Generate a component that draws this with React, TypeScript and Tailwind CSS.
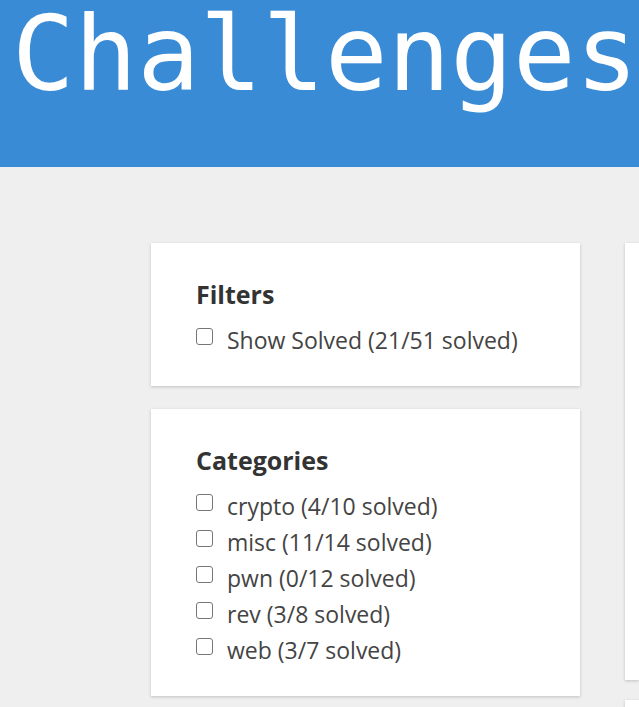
const categories = [
  { name: "crypto", solved: 4, total: 10 },
  { name: "misc", solved: 11, total: 14 },
  { name: "pwn", solved: 0, total: 12 },
  { name: "rev", solved: 3, total: 8 },
  { name: "web", solved: 3, total: 7 },
];

function Check({ label }: { label: string }) {
  return (
    <label className="flex items-start h-[36px]">
      <span className="mt-[4px] w-[17px] h-[17px] shrink-0 rounded-[3px] border border-[#767676] bg-white" />
      <span className="ml-[14px] text-[23px] leading-[32px] text-[#444] whitespace-nowrap">{label}</span>
    </label>
  );
}

function Card({ title, children }: { title: string; children: React.ReactNode }) {
  return (
    <div className="bg-white shadow-[0_1px_3px_rgba(0,0,0,0.2)] px-[45px] pt-[35px] pb-[26px]">
      <h3 className="text-[25px] leading-[32px] font-bold text-[#333] mb-[14px]">{title}</h3>
      {children}
    </div>
  );
}

export default function App() {
  return (
    <div className="h-[707px] bg-[#efefef] overflow-hidden" style={{ fontFamily: '"Open Sans", sans-serif' }}>
      <header className="h-[167px] bg-[#3a8bd6] overflow-hidden">
        <h1
          className="pl-[12px] pt-[2px] text-white text-[104px] leading-[104px] whitespace-nowrap"
          style={{ fontFamily: '"DejaVu Sans Mono", monospace' }}
        >
          Challenges
        </h1>
      </header>
      <main className="flex gap-[45px] pl-[151px] pt-[76px]">
        <div className="w-[429px] shrink-0 flex flex-col gap-[23px]">
          <Card title="Filters">
            <Check label="Show Solved (21/51 solved)" />
          </Card>
          <Card title="Categories">
            {categories.map((c) => (
              <Check key={c.name} label={`${c.name} (${c.solved}/${c.total} solved)`} />
            ))}
          </Card>
        </div>
        <div className="flex-1 flex flex-col gap-[20px]">
          <div className="h-[437px] bg-white shadow-[0_1px_3px_rgba(0,0,0,0.2)]" />
          <div className="h-[100px] bg-white shadow-[0_1px_3px_rgba(0,0,0,0.2)]" />
        </div>
      </main>
    </div>
  );
}
